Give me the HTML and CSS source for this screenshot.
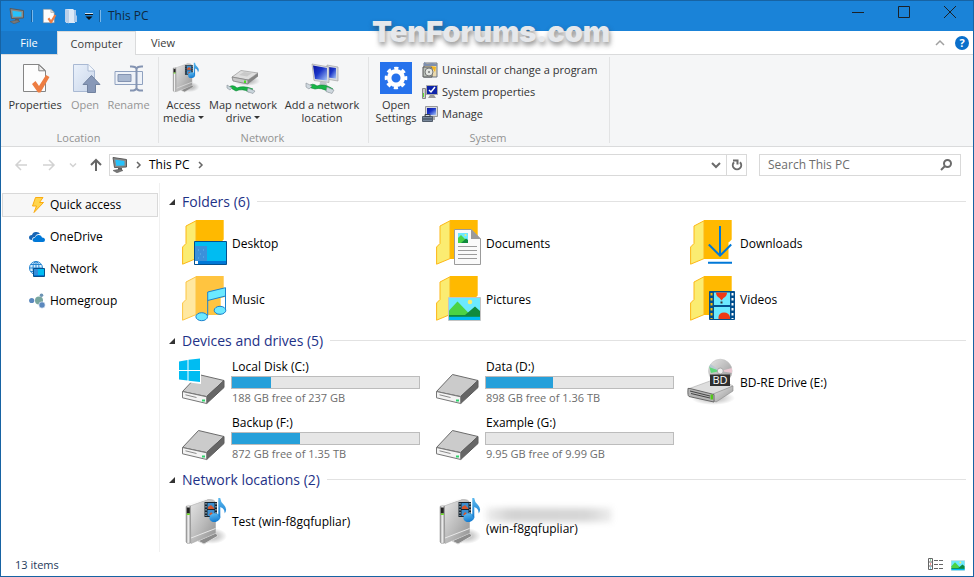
FILE: index.html
```html
<!DOCTYPE html>
<html lang="en">
<head>
<meta charset="utf-8">
<title>This PC</title>
<link rel="stylesheet" href="styles.css">
</head>
<body>
<svg class="defs" aria-hidden="true">
  <defs>
    <linearGradient id="metal" x1="0" y1="0" x2="1" y2="1"><stop offset="0" stop-color="#e6e6e6"/><stop offset=".55" stop-color="#b9b9b9"/><stop offset="1" stop-color="#8e8e8e"/></linearGradient>
    <linearGradient id="edge" x1="0" y1="0" x2="1" y2="0"><stop offset="0" stop-color="#8b8b8b"/><stop offset=".5" stop-color="#f4f4f4"/><stop offset="1" stop-color="#9a9a9a"/></linearGradient>
    <linearGradient id="screen" x1="0" y1="0" x2="1" y2="1"><stop offset="0" stop-color="#0a14a0"/><stop offset=".45" stop-color="#1a35c8"/><stop offset="1" stop-color="#a9c8f8"/></linearGradient>
    <linearGradient id="pale" x1="0" y1="0" x2="1" y2="1"><stop offset="0" stop-color="#eaf1fb"/><stop offset="1" stop-color="#c9d6ea"/></linearGradient>
    <linearGradient id="noteblue" x1="0" y1="0" x2="0" y2="1"><stop offset="0" stop-color="#5ab8ee"/><stop offset="1" stop-color="#1279cf"/></linearGradient>
    <radialGradient id="shade"><stop offset="0" stop-color="#000" stop-opacity=".35"/><stop offset="1" stop-color="#000" stop-opacity="0"/></radialGradient>
  </defs>
  <symbol id="folder" viewBox="0 0 50 48">
    <path d="M18 0H45.7V19.5L42.7 22.5V39H18z" fill="#ffb900"/>
    <path d="M18 .8L8 6V23.5L4.6 27V44.2L18 38.6z" fill="#fbec71" stroke="#fcb716"/>
  </symbol>
  <symbol id="drive" viewBox="0 0 50 48">
    <path d="M20.5 15.5L46 21.5L28.7 37.5L4.5 32.5z" fill="#cbcbcb" stroke="#6c6c6c"/>
    <path d="M46 21.5V28.5L28.7 44.5V37.5z" fill="#666" stroke="#5c5c5c"/>
    <path d="M4.5 32.5L28.7 37.8V44.5L4.5 38.8z" fill="#f3f3f3" stroke="#777"/>
    <path d="M7.5 35.8L18.5 38.5" stroke="#8a8a8a"/>
    <path d="M24 40.5h3v2h-3z" fill="#2fd36c"/>
  </symbol>
  <symbol id="server" viewBox="0 0 50 48">
    <ellipse cx="34" cy="38" rx="15" ry="8" fill="url(#shade)"/>
    <path d="M20 43L38 35L40 38L26 46z" fill="#8c8c8c" stroke="#ddd"/>
    <path d="M12 8L30 1.5Q37 1 37.5 5V35L13 45.5z" fill="url(#metal)" stroke="#aaa" stroke-width=".6"/>
    <path d="M13 40L37.5 30.5" stroke="#e8e8e8"/>
    <path d="M8 9Q8 7 12.5 8V45Q9 46.500 8 44z" fill="url(#edge)" stroke="#888" stroke-width=".5"/>
    <path d="M8.800 9.500h3v6h-3z" fill="#222"/><path d="M8.800 15.500h3v1.500h-3z" fill="#6be01e"/>
    <path d="M9 7L29 1" stroke="#fafafa"/>
    <path d="M26.500 4H39V19H26.500z" fill="#17242f"/>
    <path d="M29.500 5h7v6h-7zM29.500 12h7v6h-7z" fill="#3d8fcf"/>
    <path d="M30 9l3-2 3 3v1h-6zM31 17l2-3 3 3z" fill="#d6552a"/>
    <path d="M28 5V18M38 5V18" stroke="#c9dbe8" stroke-dasharray="1.500 1.500"/>
    <ellipse cx="36.800" cy="19.600" rx="5.500" ry="4.400" transform="rotate(-12 36.800 19.600)" fill="url(#noteblue)"/>
    <path d="M40.300 0H42.200Q42.500 4 46 7Q49.800 11 46.700 15.500Q47 10.500 42.300 9V20L40.300 18z" fill="url(#noteblue)"/>
  </symbol>
  <symbol id="pc" viewBox="0 0 16 16">
    <path d="M1 .5L14.500 2.500V10L2.500 10.500z" fill="#8a8a8a" stroke="#595959"/>
    <path d="M3.300 2.800L12.500 4V8.600L4.200 8.800z" fill="#27c2fb"/>
    <path d="M6 11h4v2H6z" fill="#5d5d5d"/><path d="M1 13.500L8 12L11 13.500L5 15.800z" fill="#777" stroke="#555" stroke-width=".5"/>
  </symbol>
  <symbol id="sheet-check" viewBox="0 0 32 32">
    <path d="M4.500 2.500H20L26.500 8.500V29.500H4.500z" fill="#fdfdfd" stroke="#858585"/>
    <path d="M19.800 2.800V8.800H26z" fill="#eee" stroke="#858585"/>
    <path d="M13 22L16.500 19L20 24L27 13L30.500 15L21.500 30.500H19z" fill="#ed7d42"/>
  </symbol>
  <symbol id="landscape" viewBox="0 0 33 24">
    <path d="M.5 .5H32.500V23.500H.5z" fill="#6ce9ff" stroke="#c4c4c4"/>
    <circle cx="22" cy="5" r="2.300" fill="#f9ec6d"/>
    <path d="M1 13.500L9.500 4.500L23 18.500H1z" fill="#4bd345"/>
    <path d="M1 18H17L27 9.500L32 14V20H1z" fill="#108a3e"/>
    <path d="M1 19.800H32V23H1z" fill="#00bcf2"/>
  </symbol>
</svg>

<div class="window">
  <header class="titlebar">
    <div class="quick-bar">
      <svg class="i16"><use href="#pc"/></svg>
      <span class="bar-sep"></span>
      <button class="bare" aria-label="Properties"><svg class="i16"><use href="#sheet-check"/></svg></button>
      <button class="bare" aria-label="New folder"><svg class="i16" viewBox="0 0 16 16"><path d="M3 1h7l2 2v12H3z" fill="#dce9f7"/><path d="M2 1l4 1v13.500L2 14z" fill="#b9cfe9"/><path d="M11 2h2v5l1 1v6h-3z" fill="#a9c8ea"/></svg></button>
      <button class="bare" aria-label="Customize toolbar"><svg class="menu-mark" viewBox="0 0 8 8"><path d="M0 1.500h8" stroke="#cfe6fa"/><path d="M0 2.500h8" stroke="#111"/><path d="M.5 4.500h7L4 8z" fill="#111"/></svg></button>
      <span class="bar-sep"></span>
    </div>
    <h1 class="title">This PC</h1>
    <div class="window-buttons">
      <button aria-label="Minimize"><svg viewBox="0 0 12 12"><path d="M0 6.500h12"/></svg></button>
      <button aria-label="Maximize"><svg viewBox="0 0 12 12"><path d="M.5 .5h11v11H.5z"/></svg></button>
      <button aria-label="Close"><svg viewBox="0 0 12 12"><path d="M0 0L12 12M12 0L0 12"/></svg></button>
    </div>
  </header>
  <div class="watermark">TenForums.com</div>

  <nav class="tabs">
    <button class="tab tab-file">File</button>
    <button class="tab tab-active">Computer</button>
    <button class="tab">View</button>
    <div class="tab-tools">
      <button class="bare" aria-label="Collapse the ribbon"><svg class="caret" viewBox="0 0 10 6"><path d="M1 5L5 1L9 5" fill="none" stroke="#a0a0a0" stroke-width="1.500"/></svg></button>
      <button class="help" aria-label="Help">?</button>
    </div>
  </nav>

  <section class="ribbon">
    <div class="group">
      <div class="tools tools-location">
        <button class="tool"><svg class="i32"><use href="#sheet-check"/></svg><span>Properties</span></button>
        <button class="tool" disabled><svg class="i32" viewBox="0 0 32 32"><path d="M4.500 2.500H19L25.500 8.500V29.500H4.500z" fill="url(#pale)" stroke="#a9b9d3"/><path d="M19 2.500V9H25.500" fill="#f4f8fd" stroke="#a9b9d3"/><path d="M22.500 13.500L31 22.500H26.500V30.500H18.500V22.500H14z" fill="#8798b8" stroke="#71829f"/></svg><span>Open</span></button>
        <button class="tool" disabled><svg class="i32" viewBox="0 0 32 32"><path d="M2 9.500H29.500V22.500H2z" fill="#eef2f8" stroke="#8fa1bf"/><path d="M5 12.500H18V19.500H5z" fill="#a9b8d0" stroke="#8494b2"/><path d="M17 4.500Q23 4 23.500 7Q24 4 30 4.500M23.500 7V26M17 28.500Q23 29 23.500 26Q24 29 30 28.500" fill="none" stroke="#8494b2" stroke-width="2"/></svg><span>Rename</span></button>
      </div>
      <p class="group-name">Location</p>
    </div>
    <div class="group">
      <div class="tools tools-network">
        <button class="tool"><svg class="i32"><use href="#server"/></svg><span>Access<br>media <i class="down"></i></span></button>
        <button class="tool"><svg class="i32" viewBox="0 0 32 32"><ellipse cx="20" cy="19" rx="13" ry="5" fill="url(#shade)"/><path d="M5 15L14 8.500L31 11L21 18z" fill="#dedede" stroke="#999" stroke-width=".7"/><path d="M5 15L21 18V22L6 19z" fill="#c6c6c6" stroke="#777" stroke-width=".7"/><path d="M21 18L31 11V14.500L21 22z" fill="#858585"/><path d="M12 13L17 10L25 11L20 14.500z" fill="#c9c9c9"/><path d="M17 18.500h2v2.500h-2z" fill="#47dc22"/><path d="M2 25Q6 22 10 26Q16 23 26 27L22 30Q15 26 9 29z" fill="#15b542" stroke="#078134" stroke-width=".6"/><path d="M0 23L5 26L3 28L0 26zM21 26L28 29L26 31.500L20 29.500z" fill="#c9d5dc" stroke="#889198" stroke-width=".6"/></svg><span>Map network<br>drive <i class="down"></i></span></button>
        <button class="tool"><svg class="i32" viewBox="0 0 32 32"><path d="M21 3L32 5V19L20 17z" fill="#d8dbe0" stroke="#999" stroke-width=".6"/><path d="M22.500 5L30 6V16.500L22 15.500z" fill="url(#screen)"/><path d="M6 2L23 5V20.500L8 18.500z" fill="#d9dbe0" stroke="#999" stroke-width=".6"/><path d="M7 3.500L21 6V18.500L9 17z" fill="url(#screen)"/><path d="M14 20h6l2 5h-9z" fill="#bfc3ca"/><path d="M2 25Q6 20 11 24Q18 21 27 27L23 30Q15 25 9 27z" fill="#17b646" stroke="#078134" stroke-width=".6"/><path d="M0 21L6 24L3 27L0 25zM21 25L28 28L26 31.500L20 29.500z" fill="#cfd8df" stroke="#889198" stroke-width=".6"/></svg><span>Add a network<br>location</span></button>
      </div>
      <p class="group-name">Network</p>
    </div>
    <div class="group">
      <div class="tools tools-system">
        <button class="tool"><svg class="i32" viewBox="0 0 32 32"><path d="M0 0H32V32H0z" fill="#2672ec"/><circle cx="16" cy="16" r="6.800" fill="none" stroke="#fff" stroke-width="4.500"/><circle cx="16" cy="16" r="9.800" fill="none" stroke="#fff" stroke-width="3" stroke-dasharray="4.200 3.497" stroke-dashoffset="2.100"/></svg><span>Open<br>Settings</span></button>
        <div class="link-list">
          <button class="row-tool"><svg class="i16" viewBox="0 0 16 16"><path d="M2 1h13v14H2z" fill="#e9d9ae" stroke="#6d7688"/><path d="M2 0l3 2 5-1 5 1v2H2z" fill="#7e8fae"/><path d="M1 5h9v10H1z" fill="#b8bfb8" stroke="#555"/><path d="M9 4l5 1-1 5z" fill="#f3b51e"/><circle cx="7" cy="10" r="4" fill="#e3e6e1" stroke="#777"/><circle cx="7" cy="10" r="1" fill="#777"/></svg>Uninstall or change a program</button>
          <button class="row-tool"><svg class="i16" viewBox="0 0 16 16"><path d="M.5 4.500h3v10h-3z" fill="#ccc" stroke="#888"/><path d="M1 9h1v4H1z" fill="#5fe02d"/><path d="M4.500 1.500h11v9h-11z" fill="#0c22a8" stroke="#aaa"/><path d="M7 6l2 2 4-5" fill="none" stroke="#fff" stroke-width="1.500"/><path d="M8 11h4l2 3H6z" fill="#999"/></svg>System properties</button>
          <button class="row-tool"><svg class="i16" viewBox="0 0 16 16"><path d="M3.500 .5h12v10h-12z" fill="#d5d9df" stroke="#999"/><path d="M5 2h9v7H5z" fill="url(#screen)"/><path d="M8 11h5v3H8z" fill="#aaa"/><path d="M.5 10.500h10v5H.5z" fill="#77879b" stroke="#525d6b"/><path d="M1 13h9M3 8.500h5v2H3z" fill="none" stroke="#394452"/></svg>Manage</button>
        </div>
      </div>
      <p class="group-name">System</p>
    </div>
  </section>

  <div class="address-row">
    <button class="nav-btn" aria-label="Back" disabled><svg viewBox="0 0 12 12"><path d="M12 6H1M6 1L1 6L6 11"/></svg></button>
    <button class="nav-btn" aria-label="Forward" disabled><svg viewBox="0 0 12 12"><path d="M0 6H11M6 1L11 6L6 11"/></svg></button>
    <button class="nav-btn nav-small" aria-label="Recent" disabled><svg viewBox="0 0 12 12"><path d="M3 4.500L6 7.500L9 4.500"/></svg></button>
    <button class="nav-btn nav-up" aria-label="Up"><svg viewBox="0 0 12 12"><path d="M6 12V1M1 6L6 1L11 6"/></svg></button>
    <div class="address">
      <svg class="i16"><use href="#pc"/></svg>
      <svg class="crumb" viewBox="0 0 5 8"><path d="M1 1L4 4L1 7"/></svg>
      <button class="crumb-name">This PC</button>
      <svg class="crumb" viewBox="0 0 5 8"><path d="M1 1L4 4L1 7"/></svg>
      <button class="address-drop" aria-label="Previous locations"><svg viewBox="0 0 10 7"><path d="M1 1L5 5L9 1"/></svg></button>
      <button class="refresh" aria-label="Refresh"><svg viewBox="0 0 12 12"><path d="M3 3.200A4.200 4.200 0 1 0 9 3.200" /><path d="M2 1.500H6.500V5.500"/></svg></button>
    </div>
    <div class="search">
      <input type="search" placeholder="Search This PC" aria-label="Search This PC">
      <svg viewBox="0 0 12 12"><circle cx="7.500" cy="4.500" r="3.500"/><path d="M5 7L1 11"/></svg>
    </div>
  </div>

  <div class="content">
    <nav class="side">
      <a href="#quick" class="selected"><svg class="i16" viewBox="0 0 16 16"><path d="M6.500 .5H14L10.500 5.500H14.500L5 15.500L7.500 9H3.500z" fill="#ffd54d" stroke="#fbab0f"/></svg>Quick access</a>
      <a href="#onedrive"><svg class="i16" viewBox="0 0 16 16"><path d="M3 11Q0 11 0 8.500Q0 6 3 6Q4 2.500 7.500 3Q10 3 11 5Q7 4.500 6 8Q3 8 3 11z" fill="#1765b5"/><path d="M6 13Q3.500 13 3.500 11Q3.500 9 6 8.500Q7 5.500 10 6Q12.500 6.300 13 8.500Q16 8.500 16 11Q16 13 14 13z" fill="#0078d7"/></svg>OneDrive</a>
      <a href="#network"><svg class="i16" viewBox="0 0 16 16"><circle cx="7" cy="7" r="6.500" fill="#d8edfb" stroke="#2785d1"/><path d="M7 .5V13M.5 7H13M2 3.500H12M2 10.500H8" stroke="#2785d1"/><ellipse cx="7" cy="7" rx="3" ry="6.500" fill="none" stroke="#2785d1"/><path d="M4.500 7.500h11v8h-11z" fill="#00bcf2" stroke="#094f8b"/><path d="M5 8h4v6H5z" fill="#338ddb"/><path d="M5 14h10v1H5z" fill="#0078d7"/></svg>Network</a>
      <a href="#homegroup"><svg class="i16" viewBox="0 0 16 16"><circle cx="2.700" cy="7.500" r="2.600" fill="#5b88be"/><circle cx="10" cy="7.500" r="4" fill="#78a69e"/><circle cx="12.500" cy="2.300" r="1.800" fill="#6d94b4"/><circle cx="13" cy="12" r="3.200" fill="#5b88be" stroke="#fff" stroke-width=".6"/></svg>Homegroup</a>
    </nav>

    <main class="files">
      <section>
        <h2><i class="fold"></i>Folders (6)</h2>
        <ul class="tiles">
          <li><a href="#desktop"><svg class="tile-icon" viewBox="0 0 50 48"><use href="#folder"/><path d="M16.500 21.500H48.500V44.500H16.500z" fill="#00bcf2" stroke="#03508e"/><path d="M17 26H29V41H17z" fill="#3b91db"/><path d="M20 30h1M25 30h1M22 34h1M20 38h1M25 37h1" stroke="#62b5ee"/><path d="M17 41H48V44H17z" fill="#0078d7"/><path d="M17 41h3v3h-3z" fill="#fff"/></svg><span>Desktop</span></a></li>
          <li><a href="#documents"><svg class="tile-icon" viewBox="0 0 50 48"><use href="#folder"/><path d="M22.500 9.500H39L48.500 19V44.500H22.500z" fill="#fafafa" stroke="#9b9b9b"/><path d="M39 9V19H49z" fill="#9b9b9b"/><path d="M26 13H36V23H26z" fill="#6ce9ff"/><path d="M26 18L29 15L34 20V23H26z" fill="#4bd345"/><path d="M29 23L34 18.500L36 20V23z" fill="#108a3e"/><circle cx="33.500" cy="15" r="1" fill="#f9ec6d"/><path d="M26 26.500H45M26 30.500H45M26 34.500H45M26 38.500H45" stroke="#9b9b9b"/></svg><span>Documents</span></a></li>
          <li><a href="#downloads"><svg class="tile-icon" viewBox="0 0 50 48"><use href="#folder"/><path d="M42.700 22h4v18h-4z" fill="#fff"/><path d="M34 6V36M22.800 24.500L34 35.700L45.200 24.500M22 42.700H46" fill="none" stroke="#0078d7" stroke-width="2"/></svg><span>Downloads</span></a></li>
          <li><a href="#music"><svg class="tile-icon" viewBox="0 0 50 48"><path d="M18 0H45.700V20L42.700 23V39H18z" fill="#ffc440"/><path d="M18 .8L8 6V23.500L4.600 27V44.200L18 38.600z" fill="#ffe8a0" stroke="#fcc543"/><path d="M29.700 24.500L47.500 20V34H43V39H30z" fill="#ffc440"/><path d="M42.700 22L47 21V34H42.700z" fill="#fff"/><path d="M29.700 16L47.500 11.700V20L29.700 24.500z" fill="#6ce9ff"/><path d="M29.700 40V16L47.500 11.700V34M29.700 24.500L47.500 20" fill="none" stroke="#1b82ce"/><ellipse cx="23.700" cy="40.700" rx="5.800" ry="4" fill="#6ce9ff" stroke="#1b82ce"/><ellipse cx="42" cy="34.300" rx="5.800" ry="4" fill="#6ce9ff" stroke="#1b82ce"/></svg><span>Music</span></a></li>
          <li><a href="#pictures"><svg class="tile-icon" viewBox="0 0 50 48"><use href="#folder"/><use href="#landscape" x="16" y="21" width="33" height="24"/></svg><span>Pictures</span></a></li>
          <li><a href="#videos"><svg class="tile-icon" viewBox="0 0 50 48"><use href="#folder"/><path d="M23.500 15.500H48.500V43.500H23.500z" fill="#03508e" stroke="#03508e"/><path d="M28 16.500H44V29H28zM28 31H44V43H28z" fill="#6ce9ff"/><path d="M30 16.500H41Q41 20 37.500 22L35.500 24.500L33.500 22Q30 20 30 16.500z" fill="#f03a17"/><path d="M34.500 25.500h2v2h-2z" fill="#333"/><path d="M32.500 43V41Q33 36.500 38 36.500Q43 36.500 44 41V43z" fill="#f03a17"/><path d="M25.500 17V43" stroke="#ffb900" stroke-width="2" stroke-dasharray="2.500 2.500"/><path d="M46.500 17V43" stroke="#fff" stroke-width="2" stroke-dasharray="2.500 2.500"/></svg><span>Videos</span></a></li>
        </ul>
      </section>
      <section>
        <h2><i class="fold"></i>Devices and drives (5)</h2>
        <ul class="tiles">
          <li><a href="#c"><svg class="tile-icon" viewBox="0 0 50 48"><use href="#drive"/><path d="M0 0L23-1V25L0 22z" fill="#fff"/><path d="M1 2.500L9.500 1V11H1zM10.500 .8L22 -.5V11H10.500zM1 12H9.500V21.500L1 20.500zM10.500 12H22V23L10.500 21.700z" fill="#00bcf2"/></svg><span class="disk">Local Disk (C:)<span class="gauge"><span class="used" style="width:21%"></span></span><small>188 GB free of 237 GB</small></span></a></li>
          <li><a href="#d"><svg class="tile-icon"><use href="#drive"/></svg><span class="disk">Data (D:)<span class="gauge"><span class="used" style="width:36%"></span></span><small>898 GB free of 1.36 TB</small></span></a></li>
          <li><a href="#e"><svg class="tile-icon" viewBox="0 0 50 48"><ellipse cx="27" cy="39" rx="22" ry="7" fill="url(#shade)"/><path d="M2 30L24 22H38L47 27L28 36z" fill="#dedede" stroke="#aaa" stroke-width=".6"/><path d="M47 27V32L30 43L27 41V35z" fill="url(#metal)" stroke="#888" stroke-width=".6"/><path d="M2 30Q1 29 4 29.500L28 35.500V43L3 37.500Q1.500 37 2 30z" fill="#b5b5b5" stroke="#686868"/><path d="M4 32L24 37M5 34.500L24 39" stroke="#444"/><path d="M24.500 35.500h2.500v5h-2.500z" fill="#52c719"/><circle cx="34.300" cy="12" r="11.800" fill="url(#metal)" stroke="#bbb" stroke-width=".5"/><path d="M34.300 12L23 7L25 14z" fill="#61d87b"/><path d="M34.300 12L24.500 5L23 8z" fill="#b9c9d2"/><path d="M34.300 12L46 9L46 14z" fill="#e9c7d1"/><circle cx="34.300" cy="12" r="3" fill="#eee" stroke="#aaa"/><path d="M24 15.500H44V27H24z" fill="#303030"/><text x="34" y="25" text-anchor="middle" class="bd">BD</text></svg><span>BD-RE Drive (E:)</span></a></li>
          <li><a href="#f"><svg class="tile-icon"><use href="#drive"/></svg><span class="disk">Backup (F:)<span class="gauge"><span class="used" style="width:36.500%"></span></span><small>872 GB free of 1.35 TB</small></span></a></li>
          <li><a href="#g"><svg class="tile-icon"><use href="#drive"/></svg><span class="disk">Example (G:)<span class="gauge"></span><small>9.95 GB free of 9.99 GB</small></span></a></li>
        </ul>
      </section>
      <section>
        <h2><i class="fold"></i>Network locations (2)</h2>
        <ul class="tiles">
          <li><a href="#test"><svg class="tile-icon"><use href="#server"/></svg><span>Test (win-f8gqfupliar)</span></a></li>
          <li><a href="#win"><svg class="tile-icon"><use href="#server"/></svg><span><span class="redacted"></span>(win-f8gqfupliar)</span></a></li>
        </ul>
      </section>
    </main>
  </div>

  <footer class="status">
    <span>13 items</span>
    <div class="views">
      <button class="bare" aria-label="Details view"><svg class="i16" viewBox="0 0 16 16"><path d="M.5 1.500h4v11h-4zM.5 5h4M.5 9h4" fill="none" stroke="#666"/><path d="M6 3.500h4M11 3.500h4M6 7.500h4M11 7.500h4M6 11.500h4M11 11.500h4" stroke="#666"/><path d="M2 3h1" stroke="#16a34a"/><path d="M2 7h1" stroke="#e22"/><path d="M2 11h1" stroke="#00a8dd"/></svg></button>
      <button class="bare" aria-label="Large icons view"><svg class="thumb"><use href="#landscape"/></svg></button>
    </div>
  </footer>
</div>
</body>
</html>
```
FILE: styles.css
```css
* { box-sizing: border-box; }

body {
  margin: 0;
  font: 12px/14px "Open Sans", "Noto Sans", sans-serif;
  color: #000;
  background: #fff;
}

button, input { font: inherit; color: inherit; }
button { border: 0; padding: 0; background: none; }
svg { display: block; flex: none; overflow: visible; }
h1, h2, p, ul { margin: 0; padding: 0; font-weight: 400; }
ul { list-style: none; }
a { color: inherit; text-decoration: none; }

.defs { position: absolute; width: 0; height: 0; }
.i16 { width: 16px; height: 16px; }
.i32 { width: 32px; height: 32px; }

.window {
  position: relative;
  display: flex;
  flex-direction: column;
  min-height: 100vh;
  border: 1px solid #1763a3;
}

/* Title bar */
.titlebar { display: flex; align-items: center; height: 30px; background: #1a83d8; }
.quick-bar { display: flex; align-items: center; gap: 6px; padding-left: 8px; }
.bar-sep { width: 2px; height: 12px; border-left: 1px solid #14609f; border-right: 1px solid #7ab8ea; }
.quick-bar .bar-sep + .bare { margin-left: 2px; }
.menu-mark { width: 8px; height: 8px; }
.title { margin-left: 7px; font-size: 12px; line-height: 14px; color: #10283c; }
.window-buttons { display: flex; align-self: flex-start; margin-left: auto; }
.window-buttons button { display: grid; place-items: center; width: 46px; height: 22px; }
.window-buttons svg { width: 12px; height: 12px; fill: none; stroke: #1c2126; }

.watermark {
  position: absolute;
  left: 371px;
  top: 13px;
  font: 900 29px/36px Inter, "Open Sans", sans-serif;
  color: #e6e8eb;
  text-shadow: 1px 3px 5px rgba(60, 60, 60, .6);
  pointer-events: none;
}

/* Tabs */
.tabs { display: flex; height: 24px; border-bottom: 1px solid #dadbdc; font-size: 11px; }
.tab { padding: 0 15px; color: #3b3b3b; }
.tab-file { width: 56px; background: #1979ca; color: #fff; }
.tab-active {
  width: 79px;
  padding: 0;
  margin-bottom: -1px;
  border: 1px solid #dadbdc;
  border-bottom: 0;
  background: #f5f6f7;
}
.tab-tools { display: flex; align-items: center; gap: 10px; margin-left: auto; padding-right: 4px; }
.caret { width: 10px; height: 6px; }
.help {
  width: 14px;
  height: 14px;
  border-radius: 50%;
  background: #0a6fcb;
  color: #fff;
  font-weight: 700;
  line-height: 14px;
}

/* Ribbon */
.ribbon { display: flex; height: 92px; padding: 2px 0 3px; background: #f5f6f7; border-bottom: 1px solid #dadbdc; font-size: 11px; }
.group { display: flex; flex-direction: column; justify-content: space-between; padding: 5px 5px 0 3px; border-right: 1px solid #e2e3e4; color: #333; }
.tools { display: grid; }
.tools-location { grid-template-columns: 62px 38px 49px; }
.tools-network { grid-template-columns: 43px 76px 82px; }
.tools-system { grid-template-columns: 48px 184px; }
.tool {
  display: flex;
  flex-direction: column;
  align-items: center;
  gap: 4px;
  line-height: 13px;
  white-space: nowrap;
}
.tool:disabled { color: #949494; }
.down { display: inline-block; border: 3px solid transparent; border-top-color: #333; border-bottom: 0; vertical-align: 3px; }
.link-list { display: flex; flex-direction: column; padding-left: 2px; }
.row-tool { display: flex; align-items: center; gap: 4px; height: 22px; margin-top: -3px; margin-bottom: 3px; white-space: nowrap; }
.group-name { line-height: 10px; text-align: center; color: #929292; }

/* Address row */
.address-row { display: flex; align-items: center; height: 36px; padding: 0 12px 0 6px; }
.nav-btn { display: grid; place-items: center; width: 28px; height: 22px; }
.nav-small { width: 20px; }
.nav-up { width: 26px; }
.nav-btn svg { width: 12px; height: 12px; fill: none; stroke: #d2d2d2; stroke-width: 1.500; }
.nav-up svg { stroke: #666; stroke-width: 2; }
.address { display: flex; flex: 1; align-items: center; height: 22px; padding-left: 2px; border: 1px solid #d9d9d9; }
.crumb { width: 5px; height: 8px; margin: 0 8px; fill: none; stroke: #666; stroke-width: 1.500; }
.address-drop, .refresh { display: grid; place-items: center; align-self: stretch; width: 20px; }
.address-drop { margin-left: auto; }
.refresh { border-left: 1px solid #d9d9d9; }
.address-drop svg { width: 10px; height: 7px; }
.refresh svg, .search svg { width: 12px; height: 12px; }
.address-drop svg, .refresh svg, .search svg { fill: none; stroke: #6b6b6b; stroke-width: 2; }
.search { display: flex; align-items: center; width: 202px; height: 22px; margin-left: 12px; padding: 0 8px; border: 1px solid #d9d9d9; }
.search input { flex: 1; min-width: 0; padding: 0; border: 0; outline: 0; background: none; }
.search input::placeholder { color: #6d6d6d; opacity: 1; }

/* Navigation and files */
.content { display: flex; flex: 1; }
.side { display: flex; flex-direction: column; gap: 8px; width: 159px; padding: 10px 1px 0; border-right: 1px solid #f0f0f0; }
.side a { display: flex; align-items: center; gap: 5px; height: 24px; padding-left: 26px; border: 1px solid transparent; }
.side .selected { border-color: #d9d9d9; background: #f7f7f7; }

.files { flex: 1; padding: 6px 7px 0 9px; }
h2 { display: flex; align-items: center; height: 27px; padding-bottom: 2px; font-size: 14px; line-height: 20px; color: #1e3287; }
h2::after { content: ""; flex: 1; height: 1px; margin-left: 7px; background: #e2e2e2; }
.fold { margin-right: 7px; border-left: 6px solid transparent; border-bottom: 6px solid #333; }
.tiles { display: grid; grid-template-columns: repeat(auto-fill, 254px); padding-left: 9px; }
.tiles a { display: flex; align-items: center; gap: 3px; height: 56px; }
.tile-icon { width: 50px; height: 48px; }
.tiles a > span { padding-left: 1px; }
.tiles a > .disk { padding: 0 0 2px; width: 189px; text-indent: 1px; }
.disk, .gauge { display: block; }
.gauge { display: flex; height: 13px; margin: 2px 0; border: 1px solid #bcbcbc; background: #e6e6e6; }
.used { background: #26a0da; }
.disk small { display: block; font-size: 11px; color: #6d6d6d; }
.bd { font: 400 11px "Open Sans", sans-serif; fill: #fff; }
.redacted { display: block; width: 126px; height: 14px; background: linear-gradient(90deg, #eee, #d2d2d2 20%, #d6d6d6 80%, #eee); filter: blur(3px); }

/* Status bar */
.status { display: flex; align-items: center; justify-content: space-between; height: 24px; padding: 2px 8px 0 14px; font-size: 11px; color: #1e395b; }
.views { display: flex; align-items: center; gap: 7px; }
.thumb { width: 14px; height: 11px; }
```
